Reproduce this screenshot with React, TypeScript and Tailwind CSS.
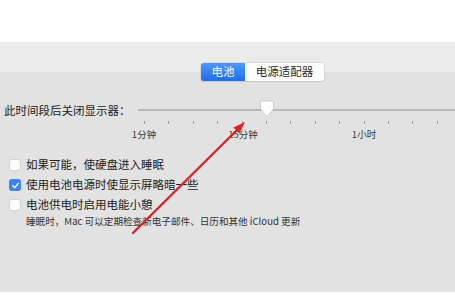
const ticks = Array.from({ length: 13 }, (_, i) => i);

const tickLabels = [
  { text: "1分钟", x: 144 },
  { text: "15分钟", x: 243 },
  { text: "1小时", x: 364 },
];

const CheckRow = ({ checked, label }: { checked?: boolean; label: string }) => (
  <div className="flex items-center h-[20px] pl-[9px]">
    {checked ? (
      <div className="w-[12px] h-[12px] rounded-[3px] bg-[#3b83f6] flex items-center justify-center">
        <svg width="9" height="9" viewBox="0 0 10 10">
          <path d="M2 5.2 L4.2 7.4 L8.2 2.6" fill="none" stroke="white" strokeWidth="1.6" strokeLinecap="round" strokeLinejoin="round" />
        </svg>
      </div>
    ) : (
      <div className="w-[12px] h-[12px] rounded-[3px] bg-white border border-[#cfcfcf]" />
    )}
    <span className="ml-[5px] text-[11.5px] text-[#222]">{label}</span>
  </div>
);

export default function App() {
  return (
    <div
      className="relative w-[455px] h-[296px] bg-white overflow-hidden flex flex-col"
      style={{ fontFamily: '"Noto Sans CJK SC", "Noto Sans", sans-serif' }}
    >
      <div className="h-[42px] bg-white shrink-0" />
      <div className="h-[250px] shrink-0 bg-[linear-gradient(to_bottom,#ebebeb_0,#ebebeb_30px,#e2e2e2_30px)] flex flex-col">
        {/* segmented control */}
        <div className="mt-[21px] ml-[201px] flex h-[18px] w-[123px] rounded-[3px] overflow-hidden shadow-[0_0_0_0.5px_#c9c9c9,0_1px_1px_rgba(0,0,0,0.12)]">
          <div className="w-[44px] bg-[linear-gradient(to_bottom,#4f98fa,#1b6ef0)] text-white text-[11.5px] flex items-center justify-center leading-none">
            电池
          </div>
          <div className="flex-1 bg-white text-[#2b2b2b] text-[11.5px] flex items-center justify-center leading-none">
            电源适配器
          </div>
        </div>

        {/* slider row */}
        <div className="mt-[22px] flex items-center h-[16px]">
          <span className="pl-[4px] w-[138px] text-[11.5px] text-[#222] whitespace-nowrap">此时间段后关闭显示器：</span>
          <div className="relative flex-1 h-[16px]">
            <div className="absolute left-0 right-0 top-[6px] h-[2px] bg-[#b9b9b9]" />
            <svg className="absolute left-[121px] top-[-3px]" width="16" height="18" viewBox="0 0 16 18">
              <path d="M1.5 2.5 Q1.5 1 3 1 L13 1 Q14.5 1 14.5 2.5 L14.5 9 L8 16.5 L1.5 9 Z" fill="white" stroke="#c4c4c4" strokeWidth="0.8" />
            </svg>
          </div>
        </div>

        {/* ticks */}
        <div className="mt-[2px] ml-[144px] w-[294px] flex justify-between h-[3px]">
          {ticks.map((t) => (
            <div key={t} className="w-px h-[3px] bg-[#9a9a9a]" />
          ))}
        </div>
        <div className="relative h-[16px] mt-[3px]">
          {tickLabels.map((l) => (
            <span
              key={l.text}
              className="absolute top-0 -translate-x-1/2 text-[9.5px] text-[#3a3a3a] whitespace-nowrap"
              style={{ left: l.x }}
            >
              {l.text}
            </span>
          ))}
        </div>

        {/* checkboxes */}
        <div className="mt-[12px] flex flex-col">
          <CheckRow label="如果可能，使硬盘进入睡眠" />
          <CheckRow checked label="使用电池电源时使显示屏略暗一些" />
          <CheckRow label="电池供电时启用电能小憩" />
          <div className="pl-[26px] -mt-[1px] text-[9.6px] text-[#333] whitespace-nowrap">
            睡眠时，Mac 可以定期检查新电子邮件、日历和其他 iCloud 更新
          </div>
        </div>
      </div>

      {/* red annotation arrow */}
      <svg className="absolute left-0 top-0 pointer-events-none" width="455" height="296">
        <line x1="133" y1="233" x2="238" y2="129" stroke="#d8232a" strokeWidth="2.4" strokeLinecap="round" />
        <polygon points="245,122 239.4,133.6 233.4,127.4" fill="#d8232a" />
      </svg>
    </div>
  );
}
